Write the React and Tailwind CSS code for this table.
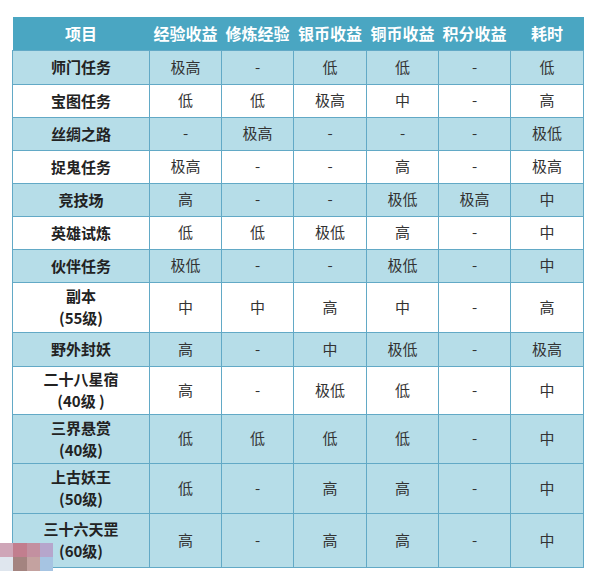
import React from 'react';

const headers = ['项目', '经验收益', '修炼经验', '银币收益', '铜币收益', '积分收益', '耗时'];

const rows = [
  { name: ['师门任务'], vals: ['极高', '-', '低', '低', '-', '低'], light: true, h: 34 },
  { name: ['宝图任务'], vals: ['低', '低', '极高', '中', '-', '高'], light: false, h: 33 },
  { name: ['丝绸之路'], vals: ['-', '极高', '-', '-', '-', '极低'], light: true, h: 33 },
  { name: ['捉鬼任务'], vals: ['极高', '-', '-', '高', '-', '极高'], light: false, h: 33 },
  { name: ['竞技场'], vals: ['高', '-', '-', '极低', '极高', '中'], light: true, h: 33 },
  { name: ['英雄试炼'], vals: ['低', '低', '极低', '高', '-', '中'], light: false, h: 33 },
  { name: ['伙伴任务'], vals: ['极低', '-', '-', '极低', '-', '中'], light: true, h: 33 },
  { name: ['副本', '(55级)'], vals: ['中', '中', '高', '中', '-', '高'], light: false, h: 50 },
  { name: ['野外封妖'], vals: ['高', '-', '中', '极低', '-', '极高'], light: true, h: 34 },
  { name: ['二十八星宿', '(40级 )'], vals: ['高', '-', '极低', '低', '-', '中'], light: false, h: 48 },
  { name: ['三界悬赏', '(40级)'], vals: ['低', '低', '低', '低', '-', '中'], light: true, h: 49 },
  { name: ['上古妖王', '(50级)'], vals: ['低', '-', '高', '高', '-', '中'], light: true, h: 50 },
  { name: ['三十六天罡', '(60级)'], vals: ['高', '-', '高', '高', '-', '中'], light: true, h: 54 },
];

const font = { fontFamily: '"Noto Sans CJK SC", "Liberation Sans", sans-serif' };

export default function App() {
  return (
    <div className="relative w-[596px] h-[571px] bg-white overflow-hidden" style={font}>
      <div className="pt-[17px] pl-[12px]">
        <table className="border-collapse table-fixed w-[571px]">
          <colgroup>
            <col className="w-[137px]" />
            <col className="w-[72px]" />
            <col className="w-[72px]" />
            <col className="w-[73px]" />
            <col className="w-[72px]" />
            <col className="w-[72px]" />
            <col className="w-[73px]" />
          </colgroup>
          <thead>
            <tr className="h-[33px] bg-[#4aa6c2]">
              {headers.map((t) => (
                <th key={t} className="text-white text-[16px] font-bold text-center p-0 leading-none whitespace-nowrap">
                  {t}
                </th>
              ))}
            </tr>
          </thead>
          <tbody>
            {rows.map((r, i) => (
              <tr
                key={i}
                style={{ height: r.h }}
                className={r.light ? 'bg-[#b6dde8]' : 'bg-white'}
              >
                <td className="border border-[#62a9c6] text-center font-bold text-[15px] text-[#222] leading-[22px] p-0">
                  {r.name.map((n) => (
                    <div key={n}>{n}</div>
                  ))}
                </td>
                {r.vals.map((v, j) => (
                  <td
                    key={j}
                    className="border border-[#62a9c6] text-center text-[15px] text-[#333] p-0"
                  >
                    {v}
                  </td>
                ))}
              </tr>
            ))}
          </tbody>
        </table>
      </div>
      <div className="absolute left-0 top-[543px] grid grid-cols-4 w-[53px]">
        <div className="h-[14px] bg-[#cfa6b8]" />
        <div className="h-[14px] bg-[#c27e8e]" />
        <div className="h-[14px] bg-[#c390a0]" />
        <div className="h-[14px] bg-[#b6a6cc]" />
        <div className="h-[14px] bg-[#dfe6ee]" />
        <div className="h-[14px] bg-[#a48480]" />
        <div className="h-[14px] bg-[#c4a2a0]" />
        <div className="h-[14px] bg-[#a6c4e2]" />
      </div>
    </div>
  );
}
